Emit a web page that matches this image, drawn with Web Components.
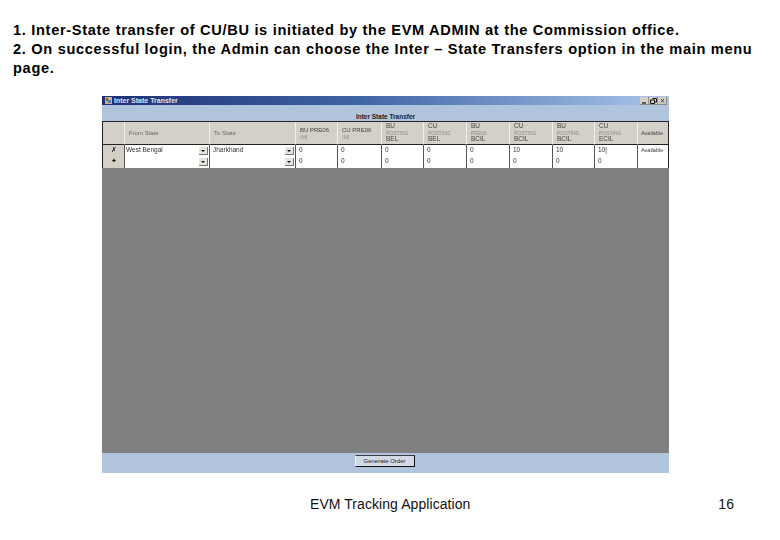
<!DOCTYPE html>
<html>
<head>
<meta charset="utf-8">
<title>EVM Tracking Application</title>
<style>
html, body { margin: 0; padding: 0; background: #fff; }
</style>
</head>
<body>
<slide-page>
	<slide-line>1. Inter-State transfer of CU/BU is initiated by the EVM ADMIN at the Commission office.</slide-line>
	<slide-line>2. On successful login, the Admin can choose the Inter – State Transfers option in the main menu page.</slide-line>
	<app-window slot="shot" caption="Inter State Transfer" heading="Inter State Transfer" action="Generate Order"></app-window>
	<span slot="footer">EVM Tracking Application</span>
	<span slot="number">16</span>
</slide-page>

<script>
// slide: text on top, screenshot in the middle, footer at the bottom
class SlidePage extends HTMLElement {
	constructor() {
		super();
		const shadow = this.attachShadow({mode:'open'});
		shadow.innerHTML = `
		<style>
			:host { display: flex; flex-direction: column; box-sizing: border-box; width: 780px; height: 540px; padding: 21px 13px 0 13px; overflow: hidden; font-family: "Liberation Sans", Arial, sans-serif; color: #000; background: #fff; }
			.text { height: 75px; }
			.shot { display: flex; justify-content: center; margin-left: 89px; width: 567px; }
			.foot { display: grid; grid-template-columns: 297px 160px 1fr; margin-top: 23px; font-size: 14px; line-height: 16px; letter-spacing: 0.07px; color: #111; }
			.foot .mid { grid-column: 2; white-space: nowrap; }
			.foot .num { grid-column: 3; text-align: right; padding-right: 33px; }
		</style>
		<div class="text"><slot></slot></div>
		<div class="shot"><slot name="shot"></slot></div>
		<div class="foot">
			<div class="mid"><slot name="footer"></slot></div>
			<div class="num"><slot name="number"></slot></div>
		</div>`;
	}
}

class SlideLine extends HTMLElement {
	constructor() {
		super();
		const shadow = this.attachShadow({mode:'open'});
		shadow.innerHTML = `
		<style>
			:host { display: block; font-weight: bold; font-size: 14.6px; line-height: 19px; letter-spacing: 0.68px; }
		</style>
		<slot></slot>`;
	}
}

// the old windows form inside the slide
class AppWindow extends HTMLElement {
	constructor() {
		super();
		const shadow = this.attachShadow({mode:'open'});
		shadow.innerHTML = `
		<style>
			:host { display: flex; flex-direction: column; width: 567px; height: 377px; background: #808080; font-family: "Liberation Sans", Arial, sans-serif; }
			.title { display: flex; align-items: center; height: 9px; background: linear-gradient(90deg, #1c2f74 0%, #3f64a6 45%, #a9c6ea 100%); color: #dfe5f0; font-size: 7px; font-weight: bold; padding-left: 3px; gap: 2px; }
			.title svg { flex: none; }
			.title .cap { flex: 1; white-space: nowrap; }
			.btns { display: flex; margin-right: 2px; }
			.band { height: 16px; background: #b0c4de; display: flex; align-items: flex-end; justify-content: center; font-size: 6.5px; font-weight: bold; color: #222; line-height: 8px; }
			.body { flex: 1; }
			.foot { height: 20px; background: #b0c4de; display: flex; justify-content: center; padding: 2px 2px 0 0; box-sizing: border-box; }
			.order { box-sizing: border-box; width: 60px; height: 12px; background: #d4d9e6; border-top: 1px solid #3c3c3c; border-left: 1px solid #f4f4f4; border-right: 1px solid #111; border-bottom: 1px solid #111; font-size: 6px; color: #222; text-align: center; line-height: 10px; }
		</style>
		<div class="title">
			<svg width="7" height="7" viewBox="0 0 7 7"><rect width="7" height="7" fill="#c9b48a"/><rect x="1" y="1" width="2" height="3" fill="#8a5a34"/><rect x="3" y="3" width="3" height="3" fill="#5c78b0"/></svg>
			<span class="cap"></span>
			<div class="btns"><win-btn kind="min"></win-btn><win-btn kind="max"></win-btn><win-btn kind="close"></win-btn></div>
		</div>
		<div class="band"><span class="head"></span></div>
		<div class="body"><transfer-grid></transfer-grid></div>
		<div class="foot"><div class="order"></div></div>`;
		shadow.querySelector(".cap").textContent = this.getAttribute("caption");
		shadow.querySelector(".head").textContent = this.getAttribute("heading");
		shadow.querySelector(".order").textContent = this.getAttribute("action");
	}
}

class WinBtn extends HTMLElement {
	constructor() {
		super();
		const shadow = this.attachShadow({mode:'open'});
		const kind = this.getAttribute("kind");
		let glyph = '<path d="M2 6h4" stroke="#111" stroke-width="1.2"/>';
		if (kind == "max") glyph = '<path d="M3.5 1.5h4v3.5h-1.5M1.5 3h4v3.5h-4z" fill="none" stroke="#111"/>';
		if (kind == "close") glyph = '<path d="M3 2l3 3.5M6 2l-3 3.5" stroke="#444"/>';
		shadow.innerHTML = `
		<style>
			:host { display: block; width: 9px; height: 8px; background: #d4d0c8; box-shadow: inset -1px -1px 0 #8f8d88; }
			svg { display: block; }
		</style>
		<svg width="9" height="8" viewBox="0 0 9 8">${glyph}</svg>`;
	}
}

const COLS = [
	{head: "", w: 22},
	{head: "From State", w: 85},
	{head: "To State", w: 86},
	{head: "BU PRE06<br><i>(M)</i>", w: 42},
	{head: "CU PRE06<br><i>(M)</i>", w: 44},
	{head: "BU<br><i>POSTING</i><br>BEL", w: 42},
	{head: "CU<br><i>POSTING</i><br>BEL", w: 43},
	{head: "BU<br><i>PRE06</i><br>BCIL", w: 43},
	{head: "CU<br><i>POSTING</i><br>BCIL", w: 43},
	{head: "BU<br><i>POSTING</i><br>BCIL", w: 42},
	{head: "CU<br><i>POSTING</i><br>ECIL", w: 43},
	{head: "Available", w: 30}
];
const ROWS = [
	["✗", "West Bengal", "Jharkhand", "0", "0", "0", "0", "0", "10", "10", "10|", "Available"],
	["✦", "", "", "0", "0", "0", "0", "0", "0", "0", "0", ""]
];

class TransferGrid extends HTMLElement {
	constructor() {
		super();
		const shadow = this.attachShadow({mode:'open'});
		let cells = "";
		COLS.forEach((c, i) => {
			let cls = "hd";
			if (i == 1 || i == 2) cls += " mid";
			if (i == 3 || i == 4) cls += " two";
			if (i == 11) cls += " mid last";
			cells += `<div class="${cls}">${c.head}</div>`;
		});
		ROWS.forEach((row) => {
			row.forEach((v, i) => {
				let cls = "cell";
				if (i == 0) cls += " sel";
				if (i == 1) cls += " from";
				if (i == 11) cls += " last";
				let inner = v;
				if (i == 1 || i == 2) inner = `<span>${v}</span><b class="drop"></b>`;
				cells += `<div class="${cls}">${inner}</div>`;
			});
		});
		shadow.innerHTML = `
		<style>
			:host { display: block; will-change: transform; }
			.grid { display: grid; grid-template-columns: ${COLS.map(c => c.w + "px").join(" ")}; grid-template-rows: 23px 11px 12px; border-left: 1px solid #222; border-right: 1px solid #222; border-top: 1px solid #222; font-size: 6.5px; line-height: 6.5px; color: #444; }
			.hd { background: #d4d0c8; border-right: 1px solid #f0efe9; border-bottom: 1px solid #222; padding: 1px 0 0 4px; box-sizing: border-box; white-space: nowrap; overflow: hidden; }
			.hd.mid { padding-top: 8px; padding-left: 4px; font-size: 6px; color: #666; }
			.hd.two { padding-top: 5px; font-size: 6px; }
			.hd.last { padding-left: 3px; font-size: 5.5px; color: #444; border-right: 0; }
			.hd i { font-style: normal; font-size: 5px; color: #8a8a8a; }
			.cell { background: #fff; border-right: 1px solid #555; box-sizing: border-box; padding: 2px 0 0 3px; display: flex; justify-content: space-between; color: #333; white-space: nowrap; overflow: hidden; }
			.cell.from { padding-left: 1px; }
			.cell.last { font-size: 5.5px; border-right: 0; }
			.cell.sel { background: #d4d0c8; justify-content: center; color: #111; padding: 2px 0 0 0; }
			.drop { flex: none; width: 9px; height: 8px; background: #e6e3dc; margin-right: 1px; box-shadow: inset -1px -1px 0 #777; position: relative; }
			.drop::after { content: ""; position: absolute; left: 2px; top: 3px; border: 2px solid transparent; border-top: 2px solid #111; }
		</style>
		<div class="grid">${cells}</div>`;
	}
}

customElements.define('win-btn', WinBtn);
customElements.define('transfer-grid', TransferGrid);
customElements.define('app-window', AppWindow);
customElements.define('slide-line', SlideLine);
customElements.define('slide-page', SlidePage);
</script>
</body>
</html>
